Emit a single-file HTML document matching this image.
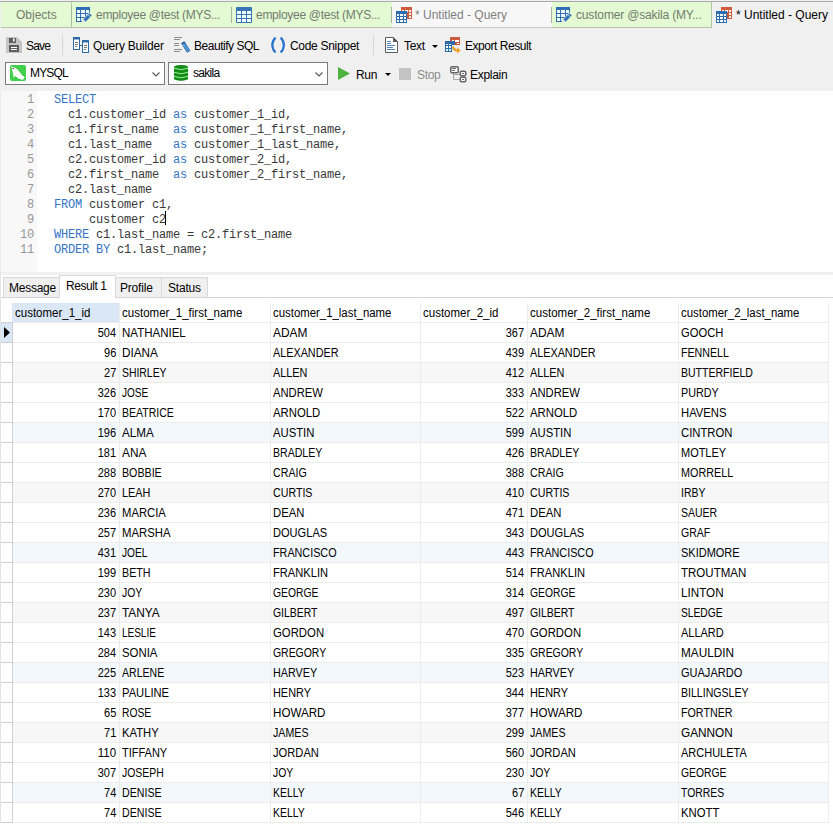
<!DOCTYPE html>
<html><head><meta charset="utf-8">
<style>
*{margin:0;padding:0;box-sizing:border-box}
html,body{width:833px;height:826px;overflow:hidden;background:#f0f0f0}
body{position:relative;font-family:"Liberation Sans",sans-serif;font-size:12px;color:#000}
.a{position:absolute}
.t{position:absolute;white-space:nowrap;line-height:14px;letter-spacing:-0.3px}
svg{position:absolute;overflow:visible}
.tab{position:absolute;top:2px;height:26px;background:#e3fad3;border-bottom:1px solid #b7c2ae}
.sep{position:absolute;top:7px;width:1px;height:16px;background:#a8b3a0}
.tabtxt{color:#737b6f;top:8px}
.tsep{position:absolute;width:1px;background:#d6d6d6}
.combo{position:absolute;top:62px;height:23px;background:#fff;border:1px solid #7a7a7a}
.ln{position:absolute;left:1px;width:33px;text-align:right;font-family:"Liberation Mono",monospace;font-size:12px;letter-spacing:-0.18px;color:#979797;line-height:15px}
.code{position:absolute;left:54px;top:93px;font-family:"Liberation Mono",monospace;font-size:12px;letter-spacing:-0.2px;color:#383838;line-height:15px;white-space:pre}
.kw{color:#3474c4}
.rtab{position:absolute;top:277px;height:20px;background:#f0f0f0;border:1px solid #d9d9d9;border-bottom:none;line-height:18px;text-align:center;letter-spacing:-0.3px;white-space:nowrap}
.rtab.act{top:275px;height:23px;background:#fff;line-height:20px}
.g{color:#000}

</style></head><body>
<div class="a" style="left:0;top:1px;width:833px;height:1px;background:#a9a9a9"></div>
<!-- TABS -->
<div class="tab" style="left:1px;width:71px"></div>
<div class="t tabtxt" style="left:16px;letter-spacing:0">Objects</div>
<div class="a" style="left:71px;top:2px;width:1px;height:26px;background:#b7c2ae"></div>
<div class="tab" style="left:72px;width:160px"></div>
<div class="sep" style="left:71px"></div>
<svg style="left:76px;top:7px" width="16" height="16"><g style="clip-path:polygon(0 0,14px 0,14px 5px,6px 13px,6px 15px,0 15px)"><rect x="0" y="0" width="14" height="15" fill="#2f70b4"/><rect x="1" y="3" width="3" height="3" fill="#eefaff"/><rect x="5" y="3" width="4" height="3" fill="#eefaff"/><rect x="10" y="3" width="3" height="3" fill="#eefaff"/><rect x="1" y="7" width="3" height="3" fill="#eefaff"/><rect x="5" y="7" width="4" height="3" fill="#eefaff"/><rect x="10" y="7" width="3" height="3" fill="#eefaff"/><rect x="1" y="11" width="3" height="3" fill="#eefaff"/><rect x="5" y="11" width="4" height="3" fill="#eefaff"/><rect x="10" y="11" width="3" height="3" fill="#eefaff"/></g><path d="M7 15L7.8 12L13.5 6.3L15.7 8.5L10 14.2Z" fill="#2f70b4"/><path d="M7 15L7.6 12.6L9.4 14.4Z" fill="#fff"/><path d="M12.2 7.8L14.2 9.8" stroke="#cdeeff" stroke-width="0.9"/></svg>
<div class="t tabtxt" style="left:96px;letter-spacing:-0.28px">employee @test (MYS...</div>
<div class="tab" style="left:232px;width:160px"></div>
<div class="sep" style="left:231px"></div>
<svg style="left:236px;top:7px" width="16" height="16"><rect x="0" y="0" width="16" height="16" rx="1" fill="#3876b8"/><rect x="1" y="4" width="4" height="3" fill="#f2fbff"/><rect x="6" y="4" width="4" height="3" fill="#f2fbff"/><rect x="11" y="4" width="4" height="3" fill="#f2fbff"/><rect x="1" y="8" width="4" height="3" fill="#f2fbff"/><rect x="6" y="8" width="4" height="3" fill="#f2fbff"/><rect x="11" y="8" width="4" height="3" fill="#f2fbff"/><rect x="1" y="12" width="4" height="3" fill="#f2fbff"/><rect x="6" y="12" width="4" height="3" fill="#f2fbff"/><rect x="11" y="12" width="4" height="3" fill="#f2fbff"/></svg>
<div class="t tabtxt" style="left:256px;letter-spacing:-0.28px">employee @test (MYS...</div>
<div class="tab" style="left:392px;width:160px;background:#f7f7f7;border-bottom-color:#c9c9c9"></div>
<div class="sep" style="left:391px"></div>
<svg style="left:396px;top:7px" width="16" height="16" id="qi1"><rect x="5" y="0" width="11" height="12" fill="#d05a3c"/><rect x="6" y="3" width="2" height="2" fill="#fff"/><rect x="9" y="3" width="3" height="2" fill="#fff"/><rect x="13" y="3" width="2" height="2" fill="#fff"/><rect x="13" y="6" width="2" height="2" fill="#fff"/><rect x="13" y="9" width="2" height="2" fill="#fff"/><rect x="0" y="4" width="11" height="12" fill="#2b6db4"/><rect x="1" y="7" width="2" height="2" fill="#fff"/><rect x="4" y="7" width="3" height="2" fill="#fff"/><rect x="8" y="7" width="2" height="2" fill="#fff"/><rect x="1" y="10" width="2" height="2" fill="#fff"/><rect x="4" y="10" width="3" height="2" fill="#fff"/><rect x="8" y="10" width="2" height="2" fill="#fff"/><rect x="1" y="13" width="2" height="2" fill="#fff"/><rect x="4" y="13" width="3" height="2" fill="#fff"/><rect x="8" y="13" width="2" height="2" fill="#fff"/></svg>
<div class="t tabtxt" style="left:415px;color:#808080;letter-spacing:0">* Untitled - Query</div>
<div class="tab" style="left:552px;width:160px;border-right:1px solid #b7c2ae"></div>
<div class="sep" style="left:551px"></div>
<svg style="left:556px;top:7px" width="16" height="16"><g style="clip-path:polygon(0 0,14px 0,14px 5px,6px 13px,6px 15px,0 15px)"><rect x="0" y="0" width="14" height="15" fill="#2f70b4"/><rect x="1" y="3" width="3" height="3" fill="#eefaff"/><rect x="5" y="3" width="4" height="3" fill="#eefaff"/><rect x="10" y="3" width="3" height="3" fill="#eefaff"/><rect x="1" y="7" width="3" height="3" fill="#eefaff"/><rect x="5" y="7" width="4" height="3" fill="#eefaff"/><rect x="10" y="7" width="3" height="3" fill="#eefaff"/><rect x="1" y="11" width="3" height="3" fill="#eefaff"/><rect x="5" y="11" width="4" height="3" fill="#eefaff"/><rect x="10" y="11" width="3" height="3" fill="#eefaff"/></g><path d="M7 15L7.8 12L13.5 6.3L15.7 8.5L10 14.2Z" fill="#2f70b4"/><path d="M7 15L7.6 12.6L9.4 14.4Z" fill="#fff"/><path d="M12.2 7.8L14.2 9.8" stroke="#cdeeff" stroke-width="0.9"/></svg>
<div class="t tabtxt" style="left:576px;letter-spacing:-0.16px">customer @sakila (MY...</div>
<svg style="left:716px;top:7px" width="16" height="16"><rect x="5" y="0" width="11" height="12" fill="#d05a3c"/><rect x="6" y="3" width="2" height="2" fill="#fff"/><rect x="9" y="3" width="3" height="2" fill="#fff"/><rect x="13" y="3" width="2" height="2" fill="#fff"/><rect x="13" y="6" width="2" height="2" fill="#fff"/><rect x="13" y="9" width="2" height="2" fill="#fff"/><rect x="0" y="4" width="11" height="12" fill="#2b6db4"/><rect x="1" y="7" width="2" height="2" fill="#fff"/><rect x="4" y="7" width="3" height="2" fill="#fff"/><rect x="8" y="7" width="2" height="2" fill="#fff"/><rect x="1" y="10" width="2" height="2" fill="#fff"/><rect x="4" y="10" width="3" height="2" fill="#fff"/><rect x="8" y="10" width="2" height="2" fill="#fff"/><rect x="1" y="13" width="2" height="2" fill="#fff"/><rect x="4" y="13" width="3" height="2" fill="#fff"/><rect x="8" y="13" width="2" height="2" fill="#fff"/></svg>
<div class="t tabtxt" style="left:736px;color:#000;letter-spacing:0">* Untitled - Query</div>

<!-- TOOLBAR ROW 1 -->
<svg style="left:6px;top:37px" width="16" height="16"><path d="M0 0H11L16 5V16H0Z" fill="#c4c4c4"/><rect x="3" y="1" width="7" height="5" fill="#5f5f5f"/><rect x="7" y="1.5" width="1.6" height="3" fill="#fff"/><rect x="3" y="8" width="10" height="7" fill="#5f5f5f"/><rect x="5" y="10" width="6" height="1" fill="#fff"/><rect x="5" y="12" width="6" height="1" fill="#fff"/></svg>
<div class="t" style="left:26px;top:39px;letter-spacing:-0.8px">Save</div>
<div class="tsep" style="left:62px;top:35px;height:20px"></div>
<svg style="left:73px;top:37px" width="16" height="16"><rect x="0.5" y="0.5" width="6" height="12" fill="#fff" stroke="#2f6aa8"/><rect x="0" y="0" width="7" height="2.5" fill="#2f6aa8"/><rect x="2" y="5" width="3" height="1" fill="#7a7a7a"/><rect x="2" y="7" width="3" height="1" fill="#7a7a7a"/><rect x="2" y="9" width="2" height="1" fill="#7a7a7a"/><rect x="9.5" y="3.5" width="6" height="12" fill="#fff" stroke="#2f6aa8"/><rect x="9" y="3" width="7" height="2.5" fill="#2f6aa8"/><rect x="11" y="8" width="3" height="1" fill="#7a7a7a"/><rect x="11" y="10" width="3" height="1" fill="#7a7a7a"/><rect x="11" y="12" width="2" height="1" fill="#7a7a7a"/><rect x="7" y="8" width="2" height="1" fill="#2f6aa8"/></svg>
<div class="t" style="left:93px;top:39px;letter-spacing:-0.2px">Query Builder</div>
<svg style="left:174px;top:37px" width="16" height="16"><g fill="#8c8c8c"><rect x="0" y="0" width="8" height="1"/><rect x="0" y="2" width="6" height="1"/><rect x="0" y="6" width="5" height="1"/><rect x="0" y="8" width="5" height="1"/><rect x="0" y="12" width="8" height="1"/><rect x="0" y="14" width="6" height="1"/></g><path d="M7.6 6.3L10.4 4.7L15.9 13.7L13.1 15.3Z" fill="#4a98e0" stroke="#2d5f96" stroke-width="0.8"/><path d="M7.6 6.3L10.4 4.7L11.3 6.2L8.5 7.8Z" fill="#2d5f96"/><path d="M9.2 8.2L10.2 7.6" stroke="#bff0ff" stroke-width="1"/></svg>
<div class="t" style="left:194px;top:39px;letter-spacing:-0.47px">Beautify SQL</div>
<svg style="left:271px;top:38px" width="15" height="15"><path d="M4.6 -0.4A10 10 0 0 0 4.6 14.4" fill="none" stroke="#2a74cc" stroke-width="2.2"/><path d="M9.6 -0.4A10 10 0 0 1 9.6 14.4" fill="none" stroke="#2a74cc" stroke-width="2.2"/></svg>
<div class="t" style="left:290px;top:39px">Code Snippet</div>
<div class="tsep" style="left:373px;top:35px;height:20px"></div>
<svg style="left:385px;top:37px" width="14" height="16"><path d="M0.5 0.5H8.5L12.5 4.5V15.5H0.5Z" fill="#fff" stroke="#5c5c5c"/><path d="M8 0V5H13Z" fill="#5c5c5c"/><g fill="#4f86bd"><rect x="2" y="4" width="4" height="1"/><rect x="2" y="6" width="4" height="1"/><rect x="2" y="8" width="8" height="1"/><rect x="2" y="10" width="6" height="1"/><rect x="2" y="12" width="8" height="1"/></g></svg>
<div class="t" style="left:404px;top:39px">Text</div>
<svg style="left:432px;top:45px" width="6" height="3"><path d="M0 0H6L3 3Z" fill="#000"/></svg>
<svg style="left:444px;top:37px" width="17" height="16"><rect x="6" y="0" width="10" height="8" fill="#c95b3c"/><rect x="8" y="3" width="2" height="2" fill="#fff"/><rect x="11" y="3" width="2" height="2" fill="#fff"/><rect x="13" y="3" width="2" height="2" fill="#fff"/><rect x="13" y="6" width="2" height="1" fill="#fff"/><path d="M1 4H11V8H8V15H1Z" fill="#2f6aa8"/><rect x="2" y="7" width="2" height="1" fill="#dff6ff"/><rect x="5" y="7" width="2" height="1" fill="#dff6ff"/><rect x="2" y="9" width="2" height="2" fill="#fff"/><rect x="5" y="9" width="2" height="2" fill="#fff"/><rect x="2" y="12" width="2" height="2" fill="#dff6ff"/><rect x="5" y="12" width="2" height="2" fill="#dff6ff"/><path d="M9 9.5C9.5 12.5 11 13.5 13.5 13.5" fill="none" stroke="#f0a020" stroke-width="2.2"/><path d="M13 10.5L16.8 13.5L13 16.5Z" fill="#f0a020"/></svg>
<div class="t" style="left:465px;top:39px;letter-spacing:-0.45px">Export Result</div>

<!-- TOOLBAR ROW 2 -->
<div class="combo" style="left:5px;width:160px"></div>
<svg style="left:10px;top:65px" width="16" height="16"><rect x="0" y="0" width="16" height="16" rx="2" fill="#42cf4a"/><path d="M1.3 1.8C3.5 1.8 6 3 8 5C9.5 6.5 10.5 8.5 12 10C13 11 14.2 11.8 14.8 12.6C14 13 13.6 13.6 13.4 14.6C12 15 10 14.6 8.5 13.6C7.2 12.8 6.2 11.6 5.2 10.8C4.8 11.6 4.4 12.4 3.9 13C3.7 12 3.5 11 3.2 10C2.8 8 2.4 5.5 1.3 1.8Z" fill="#fff"/><circle cx="3.3" cy="3.6" r="0.75" fill="#333"/></svg>
<div class="t" style="left:30px;top:66px;letter-spacing:-0.85px">MYSQL</div>
<svg style="left:152px;top:72px" width="8" height="5"><path d="M0.5 0.5L4 4L7.5 0.5" fill="none" stroke="#555" stroke-width="1.1"/></svg>
<div class="combo" style="left:168px;width:160px"></div>
<svg style="left:174px;top:65px" width="14" height="16"><path d="M0 2.2C0 0.9 3 0 7 0S14 0.9 14 2.2V13.6C14 14.9 11 15.8 7 15.8S0 14.9 0 13.6Z" fill="#148c18"/><path d="M0 3.2Q7 6.2 14 3.2M0 7.3Q7 10.2 14 7.3M0 11.4Q7 14.2 14 11.4" fill="none" stroke="#9af09a" stroke-width="1"/></svg>
<div class="t" style="left:193px;top:66px;letter-spacing:-0.7px">sakila</div>
<svg style="left:315px;top:72px" width="8" height="5"><path d="M0.5 0.5L4 4L7.5 0.5" fill="none" stroke="#555" stroke-width="1.1"/></svg>
<svg style="left:338px;top:67px" width="12" height="13"><path d="M0 0L12 6.5L0 13Z" fill="#4cb43c"/></svg>
<div class="t" style="left:356px;top:68px">Run</div>
<svg style="left:385px;top:73px" width="6" height="3"><path d="M0 0H6L3 3Z" fill="#000"/></svg>
<div class="a" style="left:399px;top:68px;width:12px;height:12px;background:#c3c3c3"></div>
<div class="t" style="left:417px;top:68px;color:#8c8c8c">Stop</div>
<svg style="left:450px;top:66px" width="17" height="16"><path d="M3.5 7V13.5H10M3.5 8.5H10" fill="none" stroke="#a8a8a8" stroke-width="1"/><rect x="0.75" y="0.75" width="7.5" height="6" rx="1.2" fill="#fff" stroke="#666" stroke-width="1.5"/><rect x="2" y="2" width="4" height="1" fill="#666"/><rect x="2" y="4" width="3" height="1" fill="#666"/><rect x="10.25" y="5.25" width="5.5" height="4.5" rx="1.2" fill="#fff" stroke="#666" stroke-width="1.5"/><rect x="12" y="7" width="2" height="1" fill="#666"/><rect x="10.25" y="11.25" width="5.5" height="4.5" rx="1.2" fill="#fff" stroke="#666" stroke-width="1.5"/><rect x="12" y="13" width="2" height="1" fill="#666"/></svg>
<div class="t" style="left:470px;top:68px">Explain</div>

<!-- EDITOR -->
<div class="a" style="left:0;top:91px;width:833px;height:181px;background:#fff"></div>
<div class="a" style="left:0;top:91px;width:1px;height:181px;background:#ececec"></div>
<div class="a" style="left:1px;top:91px;width:36px;height:181px;background:#f8f8f8"></div>
<div class="ln" style="top:93px">1<br>2<br>3<br>4<br>5<br>6<br>7<br>8<br>9<br>10<br>11</div>
<div class="code"><span class="kw">SELECT</span>
  c1.customer_id <span class="kw">as</span> customer_1_id,
  c1.first_name  <span class="kw">as</span> customer_1_first_name,
  c1.last_name   <span class="kw">as</span> customer_1_last_name,
  c2.customer_id <span class="kw">as</span> customer_2_id,
  c2.first_name  <span class="kw">as</span> customer_2_first_name,
  c2.last_name
<span class="kw">FROM</span> customer c1,
     customer c2
<span class="kw">WHERE</span> c1.last_name = c2.first_name
<span class="kw">ORDER BY</span> c1.last_name;</div>
<div class="a" style="left:165px;top:211px;width:1px;height:14px;background:#000"></div>
<div class="a" style="left:0;top:275px;width:833px;height:551px;background:#fff"></div>
<div class="a" style="left:0;top:297px;width:833px;height:1px;background:#d4d4d4"></div>
<div class="rtab" style="left:3px;width:57px"></div>
<div class="rtab" style="left:115px;width:47px"></div>
<div class="rtab" style="left:161px;width:47px"></div>
<div class="rtab act" style="left:59px;width:57px"></div>
<div class="t" style="left:9px;top:281px;letter-spacing:-0.25px">Message</div>
<div class="t" style="left:120px;top:281px;letter-spacing:-0.2px">Profile</div>
<div class="t" style="left:168px;top:281px;letter-spacing:-0.2px">Status</div>
<div class="t" style="left:66px;top:279px;letter-spacing:-0.45px">Result 1</div>
<div class="a" style="left:13px;top:363px;width:815px;height:19px;background:#f7f7f7"></div>
<div class="a" style="left:13px;top:423px;width:815px;height:19px;background:#f3f8fd"></div>
<div class="a" style="left:13px;top:483px;width:815px;height:19px;background:#f7f7f7"></div>
<div class="a" style="left:13px;top:543px;width:815px;height:19px;background:#f3f8fd"></div>
<div class="a" style="left:13px;top:603px;width:815px;height:19px;background:#f7f7f7"></div>
<div class="a" style="left:13px;top:663px;width:815px;height:19px;background:#f3f8fd"></div>
<div class="a" style="left:13px;top:723px;width:815px;height:19px;background:#f7f7f7"></div>
<div class="a" style="left:13px;top:783px;width:815px;height:19px;background:#f3f8fd"></div>
<div class="a" style="left:12px;top:303px;width:108px;height:19px;background:#dae7f6"></div>
<div class="a" style="left:0;top:272px;width:1px;height:26px;background:#e6e6e6"></div>
<div class="a" style="left:1px;top:323px;width:11px;height:19px;background:#dae7f6"></div>
<div class="a" style="left:0;top:298px;width:1px;height:525px;background:#e3e3e3"></div>
<div class="a" style="left:1px;top:322px;width:11px;height:1px;background:#cfcfcf"></div>
<div class="a" style="left:13px;top:322px;width:816px;height:1px;background:#ececec"></div>
<div class="a" style="left:1px;top:342px;width:11px;height:1px;background:#cfcfcf"></div>
<div class="a" style="left:13px;top:342px;width:816px;height:1px;background:#ececec"></div>
<div class="a" style="left:1px;top:362px;width:11px;height:1px;background:#cfcfcf"></div>
<div class="a" style="left:13px;top:362px;width:816px;height:1px;background:#ececec"></div>
<div class="a" style="left:1px;top:382px;width:11px;height:1px;background:#cfcfcf"></div>
<div class="a" style="left:13px;top:382px;width:816px;height:1px;background:#ececec"></div>
<div class="a" style="left:1px;top:402px;width:11px;height:1px;background:#cfcfcf"></div>
<div class="a" style="left:13px;top:402px;width:816px;height:1px;background:#ececec"></div>
<div class="a" style="left:1px;top:422px;width:11px;height:1px;background:#cfcfcf"></div>
<div class="a" style="left:13px;top:422px;width:816px;height:1px;background:#ececec"></div>
<div class="a" style="left:1px;top:442px;width:11px;height:1px;background:#cfcfcf"></div>
<div class="a" style="left:13px;top:442px;width:816px;height:1px;background:#ececec"></div>
<div class="a" style="left:1px;top:462px;width:11px;height:1px;background:#cfcfcf"></div>
<div class="a" style="left:13px;top:462px;width:816px;height:1px;background:#ececec"></div>
<div class="a" style="left:1px;top:482px;width:11px;height:1px;background:#cfcfcf"></div>
<div class="a" style="left:13px;top:482px;width:816px;height:1px;background:#ececec"></div>
<div class="a" style="left:1px;top:502px;width:11px;height:1px;background:#cfcfcf"></div>
<div class="a" style="left:13px;top:502px;width:816px;height:1px;background:#ececec"></div>
<div class="a" style="left:1px;top:522px;width:11px;height:1px;background:#cfcfcf"></div>
<div class="a" style="left:13px;top:522px;width:816px;height:1px;background:#ececec"></div>
<div class="a" style="left:1px;top:542px;width:11px;height:1px;background:#cfcfcf"></div>
<div class="a" style="left:13px;top:542px;width:816px;height:1px;background:#ececec"></div>
<div class="a" style="left:1px;top:562px;width:11px;height:1px;background:#cfcfcf"></div>
<div class="a" style="left:13px;top:562px;width:816px;height:1px;background:#ececec"></div>
<div class="a" style="left:1px;top:582px;width:11px;height:1px;background:#cfcfcf"></div>
<div class="a" style="left:13px;top:582px;width:816px;height:1px;background:#ececec"></div>
<div class="a" style="left:1px;top:602px;width:11px;height:1px;background:#cfcfcf"></div>
<div class="a" style="left:13px;top:602px;width:816px;height:1px;background:#ececec"></div>
<div class="a" style="left:1px;top:622px;width:11px;height:1px;background:#cfcfcf"></div>
<div class="a" style="left:13px;top:622px;width:816px;height:1px;background:#ececec"></div>
<div class="a" style="left:1px;top:642px;width:11px;height:1px;background:#cfcfcf"></div>
<div class="a" style="left:13px;top:642px;width:816px;height:1px;background:#ececec"></div>
<div class="a" style="left:1px;top:662px;width:11px;height:1px;background:#cfcfcf"></div>
<div class="a" style="left:13px;top:662px;width:816px;height:1px;background:#ececec"></div>
<div class="a" style="left:1px;top:682px;width:11px;height:1px;background:#cfcfcf"></div>
<div class="a" style="left:13px;top:682px;width:816px;height:1px;background:#ececec"></div>
<div class="a" style="left:1px;top:702px;width:11px;height:1px;background:#cfcfcf"></div>
<div class="a" style="left:13px;top:702px;width:816px;height:1px;background:#ececec"></div>
<div class="a" style="left:1px;top:722px;width:11px;height:1px;background:#cfcfcf"></div>
<div class="a" style="left:13px;top:722px;width:816px;height:1px;background:#ececec"></div>
<div class="a" style="left:1px;top:742px;width:11px;height:1px;background:#cfcfcf"></div>
<div class="a" style="left:13px;top:742px;width:816px;height:1px;background:#ececec"></div>
<div class="a" style="left:1px;top:762px;width:11px;height:1px;background:#cfcfcf"></div>
<div class="a" style="left:13px;top:762px;width:816px;height:1px;background:#ececec"></div>
<div class="a" style="left:1px;top:782px;width:11px;height:1px;background:#cfcfcf"></div>
<div class="a" style="left:13px;top:782px;width:816px;height:1px;background:#ececec"></div>
<div class="a" style="left:1px;top:802px;width:11px;height:1px;background:#cfcfcf"></div>
<div class="a" style="left:13px;top:802px;width:816px;height:1px;background:#ececec"></div>
<div class="a" style="left:1px;top:822px;width:11px;height:1px;background:#cfcfcf"></div>
<div class="a" style="left:13px;top:822px;width:816px;height:1px;background:#ececec"></div>
<div class="a" style="left:12px;top:322px;width:1px;height:501px;background:#cfcfcf"></div>
<div class="a" style="left:119px;top:303px;width:1px;height:520px;background:#ececec"></div>
<div class="a" style="left:270px;top:303px;width:1px;height:520px;background:#ececec"></div>
<div class="a" style="left:420px;top:303px;width:1px;height:520px;background:#ececec"></div>
<div class="a" style="left:527px;top:303px;width:1px;height:520px;background:#ececec"></div>
<div class="a" style="left:678px;top:303px;width:1px;height:520px;background:#ececec"></div>
<div class="a" style="left:828px;top:303px;width:1px;height:520px;background:#ececec"></div>
<div class="t g" style="left:15px;top:306px;letter-spacing:0;transform:scaleX(0.959);transform-origin:0 0">customer_1_id</div>
<div class="t g" style="left:122px;top:306px;letter-spacing:0;transform:scaleX(0.960);transform-origin:0 0">customer_1_first_name</div>
<div class="t g" style="left:273px;top:306px;letter-spacing:0;transform:scaleX(0.949);transform-origin:0 0">customer_1_last_name</div>
<div class="t g" style="left:423px;top:306px;letter-spacing:0;transform:scaleX(0.959);transform-origin:0 0">customer_2_id</div>
<div class="t g" style="left:530px;top:306px;letter-spacing:0;transform:scaleX(0.960);transform-origin:0 0">customer_2_first_name</div>
<div class="t g" style="left:681px;top:306px;letter-spacing:0;transform:scaleX(0.949);transform-origin:0 0">customer_2_last_name</div>
<div class="t g" style="right:717px;top:326px;letter-spacing:0;transform:scaleX(0.916);transform-origin:100% 0">504</div>
<div class="t g" style="left:122px;top:326px;letter-spacing:0;transform:scaleX(0.959);transform-origin:0 0">NATHANIEL</div>
<div class="t g" style="left:273px;top:326px;letter-spacing:0;transform:scaleX(0.993);transform-origin:0 0">ADAM</div>
<div class="t g" style="right:309px;top:326px;letter-spacing:0;transform:scaleX(0.916);transform-origin:100% 0">367</div>
<div class="t g" style="left:530px;top:326px;letter-spacing:0;transform:scaleX(0.993);transform-origin:0 0">ADAM</div>
<div class="t g" style="left:681px;top:326px;letter-spacing:0;transform:scaleX(0.934);transform-origin:0 0">GOOCH</div>
<div class="t g" style="right:717px;top:346px;letter-spacing:0;transform:scaleX(0.916);transform-origin:100% 0">96</div>
<div class="t g" style="left:122px;top:346px;letter-spacing:0;transform:scaleX(0.980);transform-origin:0 0">DIANA</div>
<div class="t g" style="left:273px;top:346px;letter-spacing:0;transform:scaleX(0.901);transform-origin:0 0">ALEXANDER</div>
<div class="t g" style="right:309px;top:346px;letter-spacing:0;transform:scaleX(0.916);transform-origin:100% 0">439</div>
<div class="t g" style="left:530px;top:346px;letter-spacing:0;transform:scaleX(0.901);transform-origin:0 0">ALEXANDER</div>
<div class="t g" style="left:681px;top:346px;letter-spacing:0;transform:scaleX(0.888);transform-origin:0 0">FENNELL</div>
<div class="t g" style="right:717px;top:366px;letter-spacing:0;transform:scaleX(0.916);transform-origin:100% 0">27</div>
<div class="t g" style="left:122px;top:366px;letter-spacing:0;transform:scaleX(0.867);transform-origin:0 0">SHIRLEY</div>
<div class="t g" style="left:273px;top:366px;letter-spacing:0;transform:scaleX(0.906);transform-origin:0 0">ALLEN</div>
<div class="t g" style="right:309px;top:366px;letter-spacing:0;transform:scaleX(0.916);transform-origin:100% 0">412</div>
<div class="t g" style="left:530px;top:366px;letter-spacing:0;transform:scaleX(0.906);transform-origin:0 0">ALLEN</div>
<div class="t g" style="left:681px;top:366px;letter-spacing:0;transform:scaleX(0.877);transform-origin:0 0">BUTTERFIELD</div>
<div class="t g" style="right:717px;top:386px;letter-spacing:0;transform:scaleX(0.916);transform-origin:100% 0">326</div>
<div class="t g" style="left:122px;top:386px;letter-spacing:0;transform:scaleX(0.838);transform-origin:0 0">JOSE</div>
<div class="t g" style="left:273px;top:386px;letter-spacing:0;transform:scaleX(0.937);transform-origin:0 0">ANDREW</div>
<div class="t g" style="right:309px;top:386px;letter-spacing:0;transform:scaleX(0.916);transform-origin:100% 0">333</div>
<div class="t g" style="left:530px;top:386px;letter-spacing:0;transform:scaleX(0.937);transform-origin:0 0">ANDREW</div>
<div class="t g" style="left:681px;top:386px;letter-spacing:0;transform:scaleX(0.900);transform-origin:0 0">PURDY</div>
<div class="t g" style="right:717px;top:406px;letter-spacing:0;transform:scaleX(0.916);transform-origin:100% 0">170</div>
<div class="t g" style="left:122px;top:406px;letter-spacing:0;transform:scaleX(0.875);transform-origin:0 0">BEATRICE</div>
<div class="t g" style="left:273px;top:406px;letter-spacing:0;transform:scaleX(0.946);transform-origin:0 0">ARNOLD</div>
<div class="t g" style="right:309px;top:406px;letter-spacing:0;transform:scaleX(0.916);transform-origin:100% 0">522</div>
<div class="t g" style="left:530px;top:406px;letter-spacing:0;transform:scaleX(0.946);transform-origin:0 0">ARNOLD</div>
<div class="t g" style="left:681px;top:406px;letter-spacing:0;transform:scaleX(0.939);transform-origin:0 0">HAVENS</div>
<div class="t g" style="right:717px;top:426px;letter-spacing:0;transform:scaleX(0.916);transform-origin:100% 0">196</div>
<div class="t g" style="left:122px;top:426px;letter-spacing:0;transform:scaleX(0.972);transform-origin:0 0">ALMA</div>
<div class="t g" style="left:273px;top:426px;letter-spacing:0;transform:scaleX(0.940);transform-origin:0 0">AUSTIN</div>
<div class="t g" style="right:309px;top:426px;letter-spacing:0;transform:scaleX(0.916);transform-origin:100% 0">599</div>
<div class="t g" style="left:530px;top:426px;letter-spacing:0;transform:scaleX(0.940);transform-origin:0 0">AUSTIN</div>
<div class="t g" style="left:681px;top:426px;letter-spacing:0;transform:scaleX(0.942);transform-origin:0 0">CINTRON</div>
<div class="t g" style="right:717px;top:446px;letter-spacing:0;transform:scaleX(0.916);transform-origin:100% 0">181</div>
<div class="t g" style="left:122px;top:446px;letter-spacing:0;transform:scaleX(0.985);transform-origin:0 0">ANA</div>
<div class="t g" style="left:273px;top:446px;letter-spacing:0;transform:scaleX(0.881);transform-origin:0 0">BRADLEY</div>
<div class="t g" style="right:309px;top:446px;letter-spacing:0;transform:scaleX(0.916);transform-origin:100% 0">426</div>
<div class="t g" style="left:530px;top:446px;letter-spacing:0;transform:scaleX(0.881);transform-origin:0 0">BRADLEY</div>
<div class="t g" style="left:681px;top:446px;letter-spacing:0;transform:scaleX(0.914);transform-origin:0 0">MOTLEY</div>
<div class="t g" style="right:717px;top:466px;letter-spacing:0;transform:scaleX(0.916);transform-origin:100% 0">288</div>
<div class="t g" style="left:122px;top:466px;letter-spacing:0;transform:scaleX(0.889);transform-origin:0 0">BOBBIE</div>
<div class="t g" style="left:273px;top:466px;letter-spacing:0;transform:scaleX(0.889);transform-origin:0 0">CRAIG</div>
<div class="t g" style="right:309px;top:466px;letter-spacing:0;transform:scaleX(0.916);transform-origin:100% 0">388</div>
<div class="t g" style="left:530px;top:466px;letter-spacing:0;transform:scaleX(0.889);transform-origin:0 0">CRAIG</div>
<div class="t g" style="left:681px;top:466px;letter-spacing:0;transform:scaleX(0.899);transform-origin:0 0">MORRELL</div>
<div class="t g" style="right:717px;top:486px;letter-spacing:0;transform:scaleX(0.916);transform-origin:100% 0">270</div>
<div class="t g" style="left:122px;top:486px;letter-spacing:0;transform:scaleX(0.904);transform-origin:0 0">LEAH</div>
<div class="t g" style="left:273px;top:486px;letter-spacing:0;transform:scaleX(0.888);transform-origin:0 0">CURTIS</div>
<div class="t g" style="right:309px;top:486px;letter-spacing:0;transform:scaleX(0.916);transform-origin:100% 0">410</div>
<div class="t g" style="left:530px;top:486px;letter-spacing:0;transform:scaleX(0.888);transform-origin:0 0">CURTIS</div>
<div class="t g" style="left:681px;top:486px;letter-spacing:0;transform:scaleX(0.869);transform-origin:0 0">IRBY</div>
<div class="t g" style="right:717px;top:506px;letter-spacing:0;transform:scaleX(0.916);transform-origin:100% 0">236</div>
<div class="t g" style="left:122px;top:506px;letter-spacing:0;transform:scaleX(0.939);transform-origin:0 0">MARCIA</div>
<div class="t g" style="left:273px;top:506px;letter-spacing:0;transform:scaleX(0.940);transform-origin:0 0">DEAN</div>
<div class="t g" style="right:309px;top:506px;letter-spacing:0;transform:scaleX(0.916);transform-origin:100% 0">471</div>
<div class="t g" style="left:530px;top:506px;letter-spacing:0;transform:scaleX(0.940);transform-origin:0 0">DEAN</div>
<div class="t g" style="left:681px;top:506px;letter-spacing:0;transform:scaleX(0.875);transform-origin:0 0">SAUER</div>
<div class="t g" style="right:717px;top:526px;letter-spacing:0;transform:scaleX(0.916);transform-origin:100% 0">257</div>
<div class="t g" style="left:122px;top:526px;letter-spacing:0;transform:scaleX(0.945);transform-origin:0 0">MARSHA</div>
<div class="t g" style="left:273px;top:526px;letter-spacing:0;transform:scaleX(0.923);transform-origin:0 0">DOUGLAS</div>
<div class="t g" style="right:309px;top:526px;letter-spacing:0;transform:scaleX(0.916);transform-origin:100% 0">343</div>
<div class="t g" style="left:530px;top:526px;letter-spacing:0;transform:scaleX(0.923);transform-origin:0 0">DOUGLAS</div>
<div class="t g" style="left:681px;top:526px;letter-spacing:0;transform:scaleX(0.876);transform-origin:0 0">GRAF</div>
<div class="t g" style="right:717px;top:546px;letter-spacing:0;transform:scaleX(0.916);transform-origin:100% 0">431</div>
<div class="t g" style="left:122px;top:546px;letter-spacing:0;transform:scaleX(0.849);transform-origin:0 0">JOEL</div>
<div class="t g" style="left:273px;top:546px;letter-spacing:0;transform:scaleX(0.899);transform-origin:0 0">FRANCISCO</div>
<div class="t g" style="right:309px;top:546px;letter-spacing:0;transform:scaleX(0.916);transform-origin:100% 0">443</div>
<div class="t g" style="left:530px;top:546px;letter-spacing:0;transform:scaleX(0.899);transform-origin:0 0">FRANCISCO</div>
<div class="t g" style="left:681px;top:546px;letter-spacing:0;transform:scaleX(0.915);transform-origin:0 0">SKIDMORE</div>
<div class="t g" style="right:717px;top:566px;letter-spacing:0;transform:scaleX(0.916);transform-origin:100% 0">199</div>
<div class="t g" style="left:122px;top:566px;letter-spacing:0;transform:scaleX(0.893);transform-origin:0 0">BETH</div>
<div class="t g" style="left:273px;top:566px;letter-spacing:0;transform:scaleX(0.927);transform-origin:0 0">FRANKLIN</div>
<div class="t g" style="right:309px;top:566px;letter-spacing:0;transform:scaleX(0.916);transform-origin:100% 0">514</div>
<div class="t g" style="left:530px;top:566px;letter-spacing:0;transform:scaleX(0.927);transform-origin:0 0">FRANKLIN</div>
<div class="t g" style="left:681px;top:566px;letter-spacing:0;transform:scaleX(0.960);transform-origin:0 0">TROUTMAN</div>
<div class="t g" style="right:717px;top:586px;letter-spacing:0;transform:scaleX(0.916);transform-origin:100% 0">230</div>
<div class="t g" style="left:122px;top:586px;letter-spacing:0;transform:scaleX(0.866);transform-origin:0 0">JOY</div>
<div class="t g" style="left:273px;top:586px;letter-spacing:0;transform:scaleX(0.860);transform-origin:0 0">GEORGE</div>
<div class="t g" style="right:309px;top:586px;letter-spacing:0;transform:scaleX(0.916);transform-origin:100% 0">314</div>
<div class="t g" style="left:530px;top:586px;letter-spacing:0;transform:scaleX(0.860);transform-origin:0 0">GEORGE</div>
<div class="t g" style="left:681px;top:586px;letter-spacing:0;transform:scaleX(0.972);transform-origin:0 0">LINTON</div>
<div class="t g" style="right:717px;top:606px;letter-spacing:0;transform:scaleX(0.916);transform-origin:100% 0">237</div>
<div class="t g" style="left:122px;top:606px;letter-spacing:0;transform:scaleX(0.986);transform-origin:0 0">TANYA</div>
<div class="t g" style="left:273px;top:606px;letter-spacing:0;transform:scaleX(0.870);transform-origin:0 0">GILBERT</div>
<div class="t g" style="right:309px;top:606px;letter-spacing:0;transform:scaleX(0.916);transform-origin:100% 0">497</div>
<div class="t g" style="left:530px;top:606px;letter-spacing:0;transform:scaleX(0.870);transform-origin:0 0">GILBERT</div>
<div class="t g" style="left:681px;top:606px;letter-spacing:0;transform:scaleX(0.853);transform-origin:0 0">SLEDGE</div>
<div class="t g" style="right:717px;top:626px;letter-spacing:0;transform:scaleX(0.916);transform-origin:100% 0">143</div>
<div class="t g" style="left:122px;top:626px;letter-spacing:0;transform:scaleX(0.831);transform-origin:0 0">LESLIE</div>
<div class="t g" style="left:273px;top:626px;letter-spacing:0;transform:scaleX(0.946);transform-origin:0 0">GORDON</div>
<div class="t g" style="right:309px;top:626px;letter-spacing:0;transform:scaleX(0.916);transform-origin:100% 0">470</div>
<div class="t g" style="left:530px;top:626px;letter-spacing:0;transform:scaleX(0.946);transform-origin:0 0">GORDON</div>
<div class="t g" style="left:681px;top:626px;letter-spacing:0;transform:scaleX(0.915);transform-origin:0 0">ALLARD</div>
<div class="t g" style="right:717px;top:646px;letter-spacing:0;transform:scaleX(0.916);transform-origin:100% 0">284</div>
<div class="t g" style="left:122px;top:646px;letter-spacing:0;transform:scaleX(0.949);transform-origin:0 0">SONIA</div>
<div class="t g" style="left:273px;top:646px;letter-spacing:0;transform:scaleX(0.870);transform-origin:0 0">GREGORY</div>
<div class="t g" style="right:309px;top:646px;letter-spacing:0;transform:scaleX(0.916);transform-origin:100% 0">335</div>
<div class="t g" style="left:530px;top:646px;letter-spacing:0;transform:scaleX(0.870);transform-origin:0 0">GREGORY</div>
<div class="t g" style="left:681px;top:646px;letter-spacing:0;transform:scaleX(0.982);transform-origin:0 0">MAULDIN</div>
<div class="t g" style="right:717px;top:666px;letter-spacing:0;transform:scaleX(0.916);transform-origin:100% 0">225</div>
<div class="t g" style="left:122px;top:666px;letter-spacing:0;transform:scaleX(0.879);transform-origin:0 0">ARLENE</div>
<div class="t g" style="left:273px;top:666px;letter-spacing:0;transform:scaleX(0.897);transform-origin:0 0">HARVEY</div>
<div class="t g" style="right:309px;top:666px;letter-spacing:0;transform:scaleX(0.916);transform-origin:100% 0">523</div>
<div class="t g" style="left:530px;top:666px;letter-spacing:0;transform:scaleX(0.897);transform-origin:0 0">HARVEY</div>
<div class="t g" style="left:681px;top:666px;letter-spacing:0;transform:scaleX(0.918);transform-origin:0 0">GUAJARDO</div>
<div class="t g" style="right:717px;top:686px;letter-spacing:0;transform:scaleX(0.916);transform-origin:100% 0">133</div>
<div class="t g" style="left:122px;top:686px;letter-spacing:0;transform:scaleX(0.933);transform-origin:0 0">PAULINE</div>
<div class="t g" style="left:273px;top:686px;letter-spacing:0;transform:scaleX(0.908);transform-origin:0 0">HENRY</div>
<div class="t g" style="right:309px;top:686px;letter-spacing:0;transform:scaleX(0.916);transform-origin:100% 0">344</div>
<div class="t g" style="left:530px;top:686px;letter-spacing:0;transform:scaleX(0.908);transform-origin:0 0">HENRY</div>
<div class="t g" style="left:681px;top:686px;letter-spacing:0;transform:scaleX(0.881);transform-origin:0 0">BILLINGSLEY</div>
<div class="t g" style="right:717px;top:706px;letter-spacing:0;transform:scaleX(0.916);transform-origin:100% 0">65</div>
<div class="t g" style="left:122px;top:706px;letter-spacing:0;transform:scaleX(0.859);transform-origin:0 0">ROSE</div>
<div class="t g" style="left:273px;top:706px;letter-spacing:0;transform:scaleX(0.968);transform-origin:0 0">HOWARD</div>
<div class="t g" style="right:309px;top:706px;letter-spacing:0;transform:scaleX(0.916);transform-origin:100% 0">377</div>
<div class="t g" style="left:530px;top:706px;letter-spacing:0;transform:scaleX(0.968);transform-origin:0 0">HOWARD</div>
<div class="t g" style="left:681px;top:706px;letter-spacing:0;transform:scaleX(0.892);transform-origin:0 0">FORTNER</div>
<div class="t g" style="right:717px;top:726px;letter-spacing:0;transform:scaleX(0.916);transform-origin:100% 0">71</div>
<div class="t g" style="left:122px;top:726px;letter-spacing:0;transform:scaleX(0.941);transform-origin:0 0">KATHY</div>
<div class="t g" style="left:273px;top:726px;letter-spacing:0;transform:scaleX(0.887);transform-origin:0 0">JAMES</div>
<div class="t g" style="right:309px;top:726px;letter-spacing:0;transform:scaleX(0.916);transform-origin:100% 0">299</div>
<div class="t g" style="left:530px;top:726px;letter-spacing:0;transform:scaleX(0.887);transform-origin:0 0">JAMES</div>
<div class="t g" style="left:681px;top:726px;letter-spacing:0;transform:scaleX(0.984);transform-origin:0 0">GANNON</div>
<div class="t g" style="right:717px;top:746px;letter-spacing:0;transform:scaleX(0.959);transform-origin:100% 0">110</div>
<div class="t g" style="left:122px;top:746px;letter-spacing:0;transform:scaleX(0.915);transform-origin:0 0">TIFFANY</div>
<div class="t g" style="left:273px;top:746px;letter-spacing:0;transform:scaleX(0.930);transform-origin:0 0">JORDAN</div>
<div class="t g" style="right:309px;top:746px;letter-spacing:0;transform:scaleX(0.916);transform-origin:100% 0">560</div>
<div class="t g" style="left:530px;top:746px;letter-spacing:0;transform:scaleX(0.930);transform-origin:0 0">JORDAN</div>
<div class="t g" style="left:681px;top:746px;letter-spacing:0;transform:scaleX(0.916);transform-origin:0 0">ARCHULETA</div>
<div class="t g" style="right:717px;top:766px;letter-spacing:0;transform:scaleX(0.916);transform-origin:100% 0">307</div>
<div class="t g" style="left:122px;top:766px;letter-spacing:0;transform:scaleX(0.870);transform-origin:0 0">JOSEPH</div>
<div class="t g" style="left:273px;top:766px;letter-spacing:0;transform:scaleX(0.866);transform-origin:0 0">JOY</div>
<div class="t g" style="right:309px;top:766px;letter-spacing:0;transform:scaleX(0.916);transform-origin:100% 0">230</div>
<div class="t g" style="left:530px;top:766px;letter-spacing:0;transform:scaleX(0.866);transform-origin:0 0">JOY</div>
<div class="t g" style="left:681px;top:766px;letter-spacing:0;transform:scaleX(0.860);transform-origin:0 0">GEORGE</div>
<div class="t g" style="right:717px;top:786px;letter-spacing:0;transform:scaleX(0.916);transform-origin:100% 0">74</div>
<div class="t g" style="left:122px;top:786px;letter-spacing:0;transform:scaleX(0.887);transform-origin:0 0">DENISE</div>
<div class="t g" style="left:273px;top:786px;letter-spacing:0;transform:scaleX(0.869);transform-origin:0 0">KELLY</div>
<div class="t g" style="right:309px;top:786px;letter-spacing:0;transform:scaleX(0.916);transform-origin:100% 0">67</div>
<div class="t g" style="left:530px;top:786px;letter-spacing:0;transform:scaleX(0.869);transform-origin:0 0">KELLY</div>
<div class="t g" style="left:681px;top:786px;letter-spacing:0;transform:scaleX(0.867);transform-origin:0 0">TORRES</div>
<div class="t g" style="right:717px;top:806px;letter-spacing:0;transform:scaleX(0.916);transform-origin:100% 0">74</div>
<div class="t g" style="left:122px;top:806px;letter-spacing:0;transform:scaleX(0.887);transform-origin:0 0">DENISE</div>
<div class="t g" style="left:273px;top:806px;letter-spacing:0;transform:scaleX(0.869);transform-origin:0 0">KELLY</div>
<div class="t g" style="right:309px;top:806px;letter-spacing:0;transform:scaleX(0.916);transform-origin:100% 0">546</div>
<div class="t g" style="left:530px;top:806px;letter-spacing:0;transform:scaleX(0.869);transform-origin:0 0">KELLY</div>
<div class="t g" style="left:681px;top:806px;letter-spacing:0;transform:scaleX(0.944);transform-origin:0 0">KNOTT</div>
<svg style="left:4px;top:327px" width="7" height="11"><path d="M0 0L6 5.5L0 11Z" fill="#000"/></svg>
</body></html>
